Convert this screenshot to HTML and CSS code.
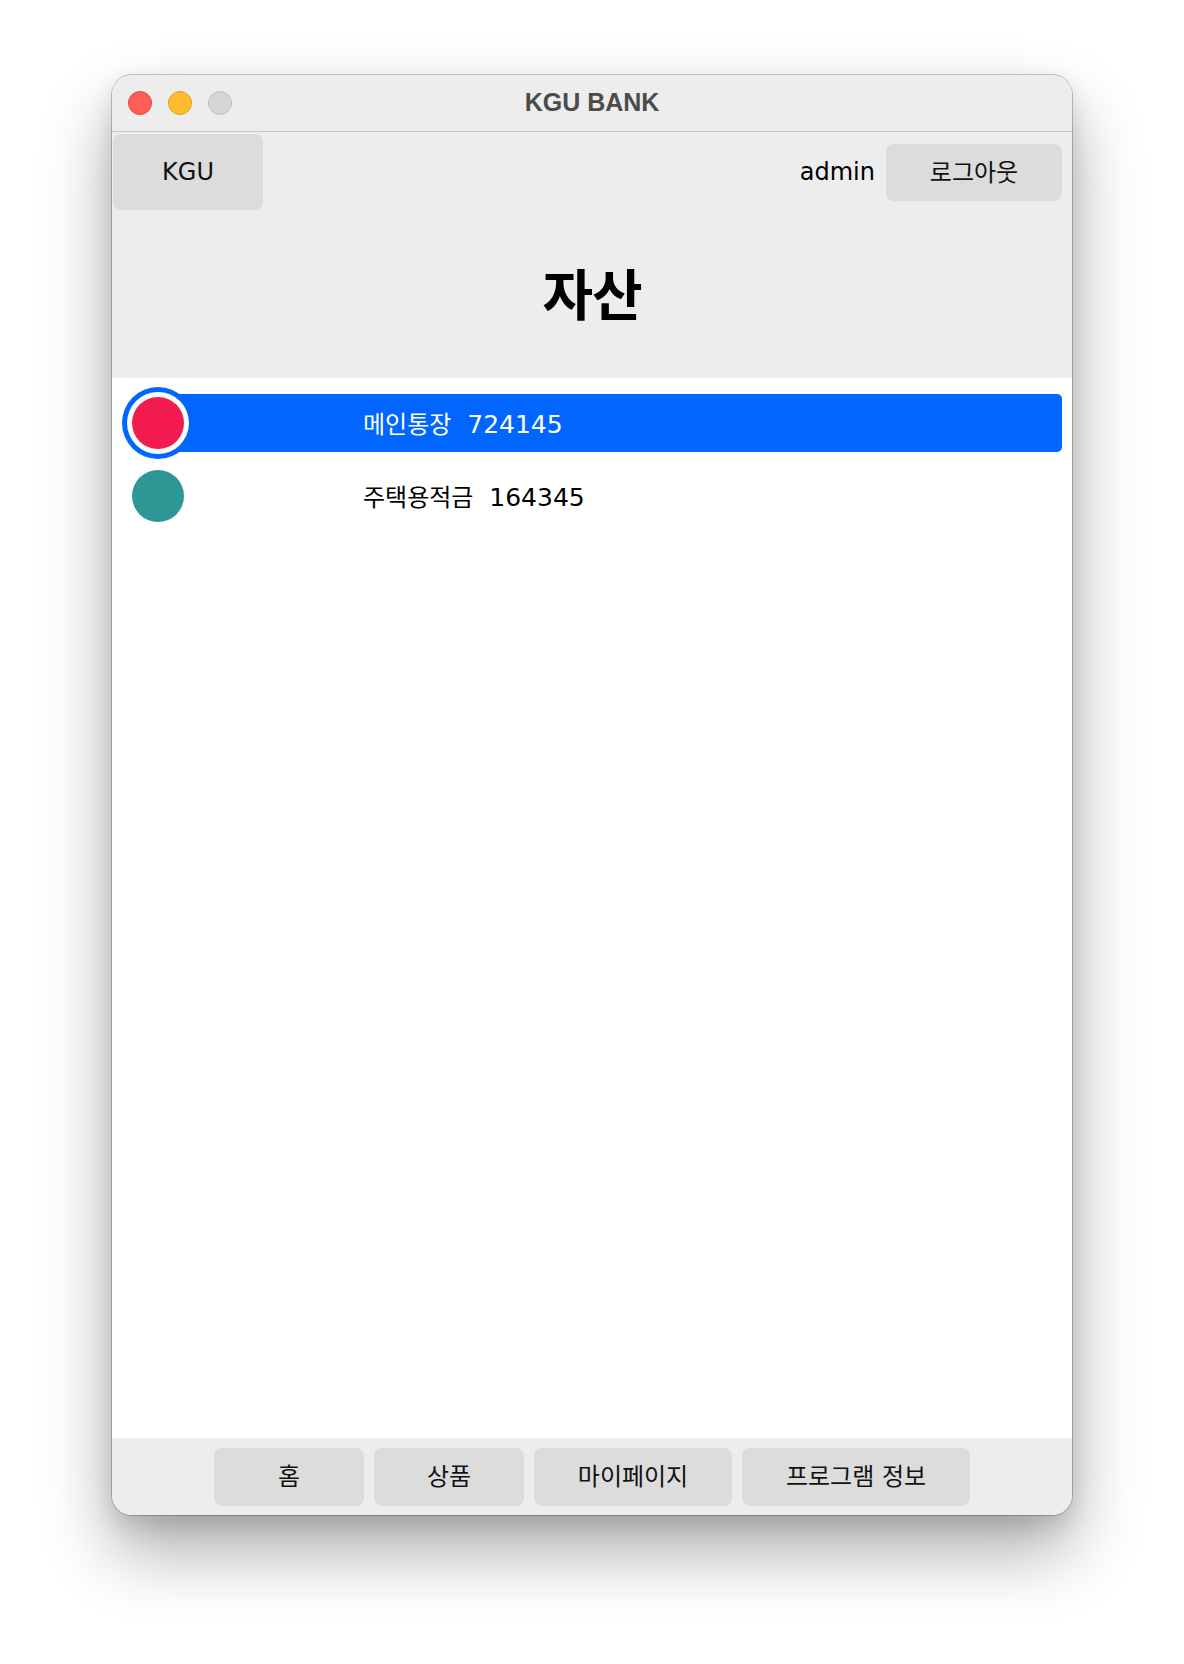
FILE: index.html
```html
<!DOCTYPE html>
<html lang="ko">
<head>
<meta charset="utf-8">
<title>KGU BANK</title>
<link rel="stylesheet" href="styles.css">
</head>
<body>
<div class="window">
  <div class="titlebar">
    <div class="lights">
      <span class="light light-close"></span>
      <span class="light light-min"></span>
      <span class="light light-max"></span>
    </div>
    <div class="title">KGU BANK</div>
    <div class="spacer"></div>
  </div>
  <div class="header">
    <div class="topbar">
      <button class="btn brand">KGU</button>
      <div class="user">
        <span class="username">admin</span>
        <button class="btn logout">로그아웃</button>
      </div>
    </div>
    <h1 class="page-title">자산</h1>
  </div>
  <div class="list">
    <div class="row selected">
      <span class="dot dot-red"></span>
      <span class="label"><span class="name">메인통장</span>  724145</span>
    </div>
    <div class="row">
      <span class="dot dot-teal"></span>
      <span class="label"><span class="name">주택용적금</span>  164345</span>
    </div>
  </div>
  <div class="footer">
    <button class="btn nav nav-home">홈</button>
    <button class="btn nav nav-product">상품</button>
    <button class="btn nav nav-mypage">마이페이지</button>
    <button class="btn nav nav-info">프로그램 정보</button>
  </div>
</div>
</body>
</html>
```
FILE: styles.css
```css
* { box-sizing: border-box; }

html, body {
  margin: 0;
  padding: 0;
  background: #ffffff;
}

body {
  font-family: "DejaVu Sans", "Noto Sans CJK KR", sans-serif;
  color: #000;
  padding: 75px 0 0 112px;
  height: 1664px;
  overflow: hidden;
}

.window {
  width: 960px;
  height: 1440px;
  border-radius: 20px;
  overflow: hidden;
  background: #ededed;
  display: flex;
  flex-direction: column;
  box-shadow: 0 0 0 1px rgba(0,0,0,0.22), 0 36px 70px rgba(0,0,0,0.33), 0 10px 24px rgba(0,0,0,0.12);
}

.titlebar {
  height: 57px;
  flex: none;
  background: #ecedec;
  border-bottom: 1px solid #c8c8c8;
  display: grid;
  grid-template-columns: 1fr auto 1fr;
  align-items: center;
}

.lights {
  display: flex;
  gap: 16px;
  padding-left: 16px;
}

.light {
  width: 24px;
  height: 24px;
  border-radius: 50%;
  display: block;
}
.light-close { background: #ff5f57; border: 1px solid #e0443e; }
.light-min { background: #febc2e; border: 1px solid #dea123; }
.light-max { background: #d6d6d5; border: 1px solid #bfbfbf; }

.title {
  font-family: "Liberation Sans", Arial, sans-serif;
  font-weight: 700;
  font-size: 25px;
  color: #4b4b4b;
  padding-bottom: 1px;
}

.header {
  height: 246px;
  flex: none;
  background: #ededed;
  display: flex;
  flex-direction: column;
}

.topbar {
  height: 78px;
  padding-top: 1px;
  display: flex;
  justify-content: space-between;
  align-items: center;
}

.btn {
  font-family: "DejaVu Sans", "Noto Sans CJK KR", sans-serif;
  font-size: 24px;
  color: #111;
  background: #dcdcdc;
  border: none;
  border-radius: 8px;
  padding: 0;
  margin: 0;
  display: flex;
  align-items: center;
  justify-content: center;
}

.brand {
  width: 150px;
  height: 76px;
  margin-left: 1px;
}

.user {
  display: flex;
  align-items: center;
  gap: 11px;
  padding-right: 10px;
}

.username {
  font-size: 24px;
  padding-top: 1px;
}

.logout {
  width: 176px;
  height: 57px;
  margin-top: 1px;
  padding-bottom: 4px;
}

.page-title {
  flex: 1;
  margin: 0;
  display: flex;
  align-items: center;
  justify-content: center;
  font-family: "Noto Sans CJK KR", sans-serif;
  font-weight: 700;
  font-size: 55px;
  letter-spacing: -1px;
  padding-bottom: 6px;
}

.list {
  flex: 1;
  background: #ffffff;
  display: flex;
  flex-direction: column;
  gap: 15px;
  padding: 16px 10px 0 10px;
}

.row {
  height: 58px;
  border-radius: 5px;
  display: flex;
  align-items: center;
  padding-left: 10px;
  color: #000;
}

.row.selected {
  background: linear-gradient(90deg, transparent 36px, #0066ff 36px);
  color: #fff;
}

.dot {
  width: 52px;
  height: 52px;
  border-radius: 50%;
  flex: none;
}
.dot-red { background: #f21a4e; }
.dot-teal { background: #2f9696; }

.row.selected .dot {
  box-shadow: 0 0 0 5px #ffffff, 0 0 0 10px #0066ff;
}

.label {
  margin-left: 179px;
  font-size: 25px;
  white-space: pre;
  padding-bottom: 2px;
}

.name {
  font-size: 24px;
}

.footer {
  height: 77px;
  flex: none;
  background: #ededed;
  display: flex;
  justify-content: center;
  align-items: flex-start;
  gap: 10px;
  padding-top: 10px;
}

.nav { height: 58px; padding-bottom: 5px; }
.nav-home { width: 150px; }
.nav-product { width: 150px; }
.nav-mypage { width: 198px; }
.nav-info { width: 228px; }
```
